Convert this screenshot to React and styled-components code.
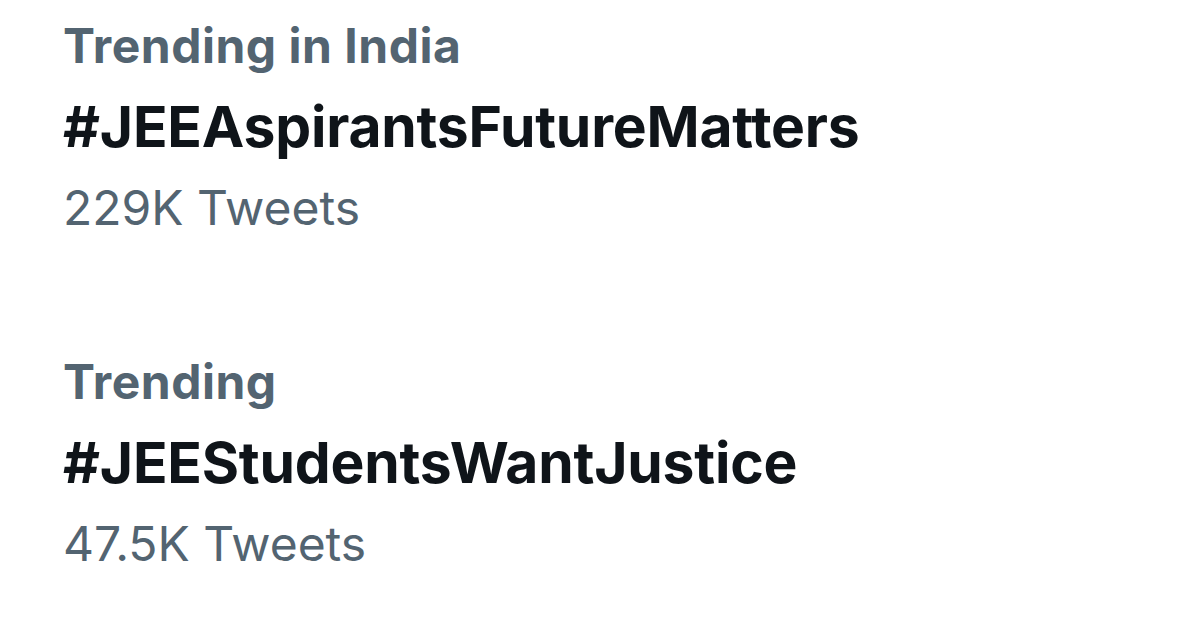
import React from "react";
import styled, { createGlobalStyle } from "styled-components";

const GlobalStyle = createGlobalStyle`
  html, body {
    margin: 0;
    padding: 0;
    background: #ffffff;
  }
  body {
    font-family: Inter, "Liberation Sans", Arial, sans-serif;
  }
`;

const Page = styled.div`
  width: 1200px;
  height: 636px;
  box-sizing: border-box;
  padding: 6px 0 0 63px;
  display: flex;
  flex-direction: column;
  gap: 94px;
  background: #ffffff;
  overflow: hidden;
`;

const Trend = styled.div`
  display: flex;
  flex-direction: column;
`;

const Context = styled.div`
  font-size: 48px;
  line-height: 80px;
  font-weight: 700;
  color: #536471;
  letter-spacing: 0.5px;
`;

const Tag = styled.div`
  font-size: 57px;
  line-height: 82px;
  font-weight: 700;
  color: #0f1419;
  letter-spacing: -0.2px;
`;

const Count = styled.div`
  font-size: 48px;
  line-height: 80px;
  font-weight: 400;
  color: #536471;
`;

const trends = [
  { context: "Trending in India", tag: "#JEEAspirantsFutureMatters", count: "229K Tweets" },
  { context: "Trending", tag: "#JEEStudentsWantJustice", count: "47.5K Tweets" },
];

export default function App() {
  return (
    <>
      <GlobalStyle />
      <Page>
        {trends.map((t) => (
          <Trend key={t.tag}>
            <Context>{t.context}</Context>
            <Tag>{t.tag}</Tag>
            <Count>{t.count}</Count>
          </Trend>
        ))}
      </Page>
    </>
  );
}
